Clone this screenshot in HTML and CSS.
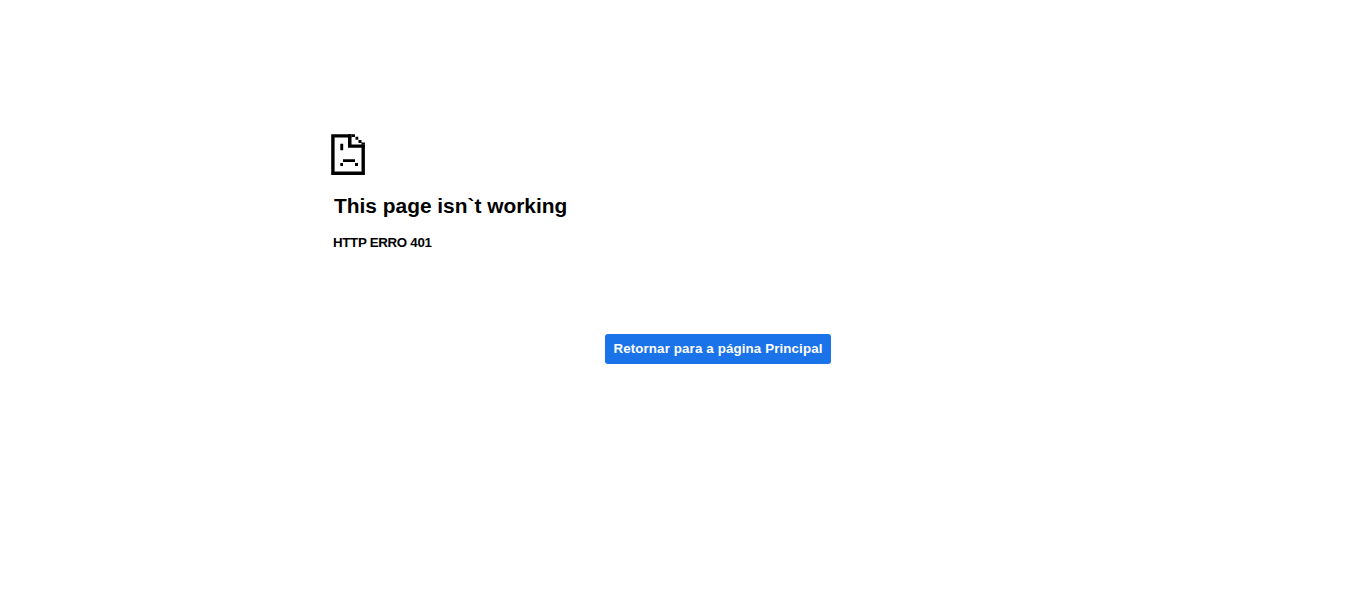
FILE: index.html
```html
<!DOCTYPE html>
<html lang="en">
<head>
<meta charset="utf-8">
<title>This page isn`t working</title>
<link rel="stylesheet" href="styles.css">
</head>
<body>
<main class="page">
  <section class="error">
    <svg class="icon" width="34" height="41" viewBox="0 0 34 41" aria-hidden="true">
      <path fill="#000" d="M.2 .3H20.5V3.6H3.6V37.6H30.5V10.5H33.9V40.9H.2Z"/>
      <path fill="#000" d="M17 .3H20.5V10.4H33.9V13.7H17Z"/>
      <path fill="#000" d="M20.7 .3H24V3H20.7ZM24.5 2.8H27.3V5.8H24.5ZM27.5 6H30.5V9H27.5ZM30.5 8.5H33.9V10.5H30.5Z"/>
      <path fill="#000" d="M9.3 9.7H12.2V16.3H9.3ZM9.3 29H12V32H9.3ZM12 25.3H24V28H12ZM24 29H27V32H24Z"/>
    </svg>
    <h1 class="title">This page isn`t working</h1>
    <p class="code">HTTP ERRO 401</p>
  </section>
  <div class="actions"><a class="button" href="#">Retornar para a página Principal</a></div>
</main>
</body>
</html>
```
FILE: styles.css
```css
html, body { margin: 0; padding: 0; background: #fff; }
body { font-family: "Liberation Sans", Arial, sans-serif; color: #000; }
.page { width: 1348px; height: 616px; padding-top: 134px; box-sizing: border-box; }
.error { margin-left: 331px; }
.icon { display: block; }
.title { margin: 19px 0 0 3px; font-size: 20.9px; line-height: 24px; font-weight: 700; }
.code { margin: 17px 0 0 2px; font-size: 13.3px; letter-spacing: -.3px; line-height: 16px; font-weight: 700; }
.actions { margin: 83px 0 0 605px; }
.button { display: inline-block; width: 226px; height: 30px; line-height: 29px; text-align: center; background: #1a73e8; color: #fff; font-size: 13.33px; font-weight: 700; letter-spacing: .125px; border-radius: 3px; text-decoration: none; }
```
